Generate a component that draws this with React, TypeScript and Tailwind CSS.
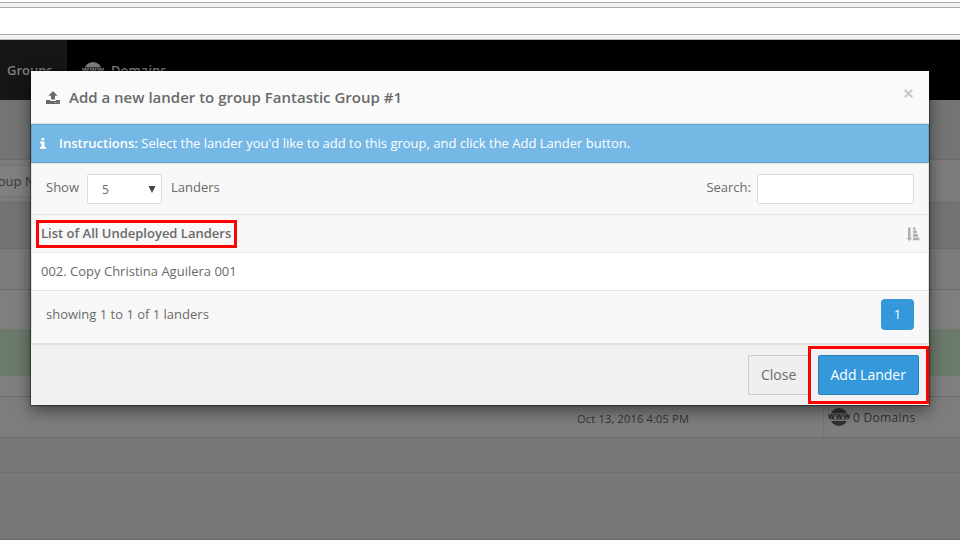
import React from "react";

function Globe({ className, color, band }: { className?: string; color: string; band: string }) {
  return (
    <svg width="22" height="20" viewBox="-1 0 22 20" className={className}>
      <circle cx="10" cy="10" r="9" fill={color} />
      <rect x="-1" y="6.5" width="22" height="6" fill={band} />
      <rect x="0" y="13" width="20" height="1" fill={band} />
      <text x="10.2" y="12" textAnchor="middle" fontSize="8" fontWeight="800" letterSpacing="0.3" fontFamily="Open Sans, sans-serif" fill={color}>
        www
      </text>
    </svg>
  );
}

function Backdrop() {
  return (
    <div className="flex h-[540px] w-[960px] flex-col">
      <div className="h-[3px] border-b border-[#a9a9a9] bg-white" />
      <div className="h-[5px] border-b border-[#a9a9a9] bg-[#f0f0f0]" />
      <div className="h-[27px] border-b border-[#a9a9a9] bg-white" />
      <div className="h-[5px] border-b border-[#b8b8b8] bg-[#f2f2f2]" />
      <nav className="flex h-[60px] bg-black text-[13px] font-semibold leading-[60px] text-[#808080]">
        <div className="w-[67px] bg-[#161616] pl-[7px]">Groups</div>
        <div className="flex items-center pl-[15px]">
          <Globe color="#808080" band="#000" className="mt-[2px]" />
          <span className="ml-[7px]">Domains</span>
        </div>
      </nav>
      <div className="h-[60px] border-b border-[#6c6c6c] bg-[#747474]" />
      <div className="h-[43px] border-b border-[#6c6c6c] bg-[#7c7c7c] pt-[5px]">
        <div className="h-[32px] w-[200px] border-y border-[#747474] bg-[#808080] text-[13px] leading-[31px] text-[#383838]">
          <span className="-ml-[17px]">Group N</span>
        </div>
      </div>
      <div className="h-[46px] border-b border-[#6c6c6c] bg-[#737373]" />
      <div className="h-[41px] border-b border-[#6c6c6c] bg-[#7c7c7c]" />
      <div className="h-[40px] border-b border-[#727a72] bg-[#7f7f7f]" />
      <div className="h-[46px] bg-[#6c7a6c]" />
      <div className="h-[21px] border-b border-[#6c6c6c] bg-[#7f7f7f]" />
      <div className="flex h-[41px] border-b border-[#6f6f6f] bg-[#7d7d7d] text-[#333]">
        <div className="w-[824px] border-r border-[#737373] pl-[577px] text-[11px] leading-[43px] tracking-[0.2px]">
          Oct 13, 2016 4:05 PM
        </div>
        <div className="flex items-center pl-[4px] text-[12px] tracking-[0.3px]">
          <Globe color="#303030" band="#7d7d7d" />
          <span className="ml-[3px] mt-[1px]">0 Domains</span>
        </div>
      </div>
      <div className="h-[35px] border-b border-[#707070] bg-[#777]" />
      <div className="grow border-b border-[#6b6868] bg-[#777]" />
    </div>
  );
}

function UploadIcon() {
  return (
    <svg width="14" height="13" viewBox="0 0 14 13" className="mt-[1px]" fill="#686868">
      <path d="M7 0 L11.6 4.7 H9 V8.6 H5 V4.7 H2.4 Z" />
      <path d="M0.4 9 H4.3 V10 H9.7 V9 H13.6 L14 9.4 V12.6 L13.6 13 H0.4 L0 12.6 V9.4 Z" />
      <path d="M9 11 H10 V12 H9 Z M11.5 11 H12.5 V12 H11.5 Z" fill="#bdbdbd" />
    </svg>
  );
}

function InfoIcon() {
  return (
    <svg width="6" height="11" viewBox="0 0 6 11" fill="#fff">
      <path d="M1.5 0 H4.3 V2.3 H1.5 Z M0 3.6 H4.5 V9 H6 V10.7 H0 V9 H1.4 V5.2 H0 Z" />
    </svg>
  );
}

function SortIcon() {
  return (
    <svg width="14" height="15" viewBox="0 0 14 15" className="mt-[2px]" fill="#b0b0b0">
      <path d="M2 0.5 H4.6 V11 H6.2 L3.3 14 L0.3 11 H2 Z" />
      <path d="M7 0.5 H9.6 V2.8 H7 Z M7 3.4 H10.8 V6.3 H7 Z M7 6.9 H12 V9.8 H7 Z M7 10.4 H13.3 V13.3 H7 Z" />
    </svg>
  );
}

function Modal() {
  return (
    <div className="absolute left-[31px] top-[71px] flex h-[334px] w-[898px] flex-col bg-[#f1f1f1] text-[13px] text-[#6a6a6a] shadow-[0_5px_15px_rgba(0,0,0,0.5),0_0_1px_1px_rgba(0,0,0,0.35)]">
      <header className="flex h-[53px] items-center border-b border-[#e2e2e2] bg-[#fafafa] pl-[15px] pr-[16px]">
        <UploadIcon />
        <h1 className="ml-[9px] text-[15px] font-semibold">Add a new lander to group Fantastic Group #1</h1>
        <svg className="mb-[8px] ml-auto" width="9" height="9" viewBox="0 0 9 9" stroke="#c8c8c8" strokeWidth="2.2">
          <path d="M0.8 0.8 L8.2 8.2 M8.2 0.8 L0.8 8.2" />
        </svg>
      </header>
      <div className="flex h-[39px] items-center border border-[#5fa5d5] bg-[#75b8e6] pl-[8px] text-white">
        <InfoIcon />
        <p className="ml-[13px]"><b className="font-semibold">Instructions:</b> Select the lander you'd like to add to this group, and click the Add Lander button.</p>
      </div>
      <div className="flex h-[182px] flex-col border border-b-2 border-[#e2e2e2] bg-[#f8f8f8]">
        <div className="flex h-[51px] items-center border-b border-[#e4e4e4] pl-[14px] pr-[14px]">
          <span className="mb-[2px]">Show</span>
          <div className="ml-[8px] flex h-[30px] w-[75px] items-center rounded-[2px] border border-[#dcdcdc] bg-white pl-[14px] pr-[5px] text-[12px]">
            <span className="mt-[2px]">5</span>
            <svg className="ml-auto" width="8" height="7" viewBox="0 0 8 7" fill="#444">
              <path d="M0.5 0 H7.5 L4 7 Z" />
            </svg>
          </div>
          <span className="mb-[2px] ml-[9px]">Landers</span>
          <span className="mb-[2px] ml-auto">Search:</span>
          <div className="ml-[6px] h-[30px] w-[157px] rounded-[2px] border border-[#dcdcdc] bg-white" />
        </div>
        <div className="flex h-[38px] items-center border-b border-[#ebebeb] pl-[9px] pr-[8px]">
          <span className="font-semibold">List of All Undeployed Landers</span>
          <span className="ml-auto"><SortIcon /></span>
        </div>
        <div className="flex h-[38px] items-center border-b border-[#e4e4e4] bg-white pl-[9px]">002. Copy Christina Aguilera 001</div>
        <div className="flex grow items-center justify-between pb-[5px] pl-[14px] pr-[14px]">
          <span>showing 1 to 1 of 1 landers</span>
          <span className="flex h-[31px] w-[33px] items-center justify-center rounded-[4px] bg-[#3598db] text-white">1</span>
        </div>
      </div>
      <footer className="flex grow items-center justify-end pr-[10px] text-[14px]">
        <div className="mr-[8px] h-[40px] w-[62px] rounded-l-[2px] border border-r-0 border-[#ccc] bg-[#efefef] pl-[12px] leading-[38px]">Close</div>
        <div className="h-[40px] w-[101px] rounded-[2px] border border-[#2a80b9] bg-[#3598db] pl-[11.5px] leading-[38px] text-white">Add Lander</div>
      </footer>
    </div>
  );
}

export default function App() {
  return (
    <div className="relative h-[540px] w-[960px] overflow-hidden whitespace-nowrap font-['Open_Sans',sans-serif]">
      <Backdrop />
      <Modal />
      <div className="absolute left-[36px] top-[220px] h-[28px] w-[201px] border-[3px] border-[#f00]" />
      <div className="absolute left-[808px] top-[346px] h-[58px] w-[121px] border-[3px] border-[#f00]" />
    </div>
  );
}
